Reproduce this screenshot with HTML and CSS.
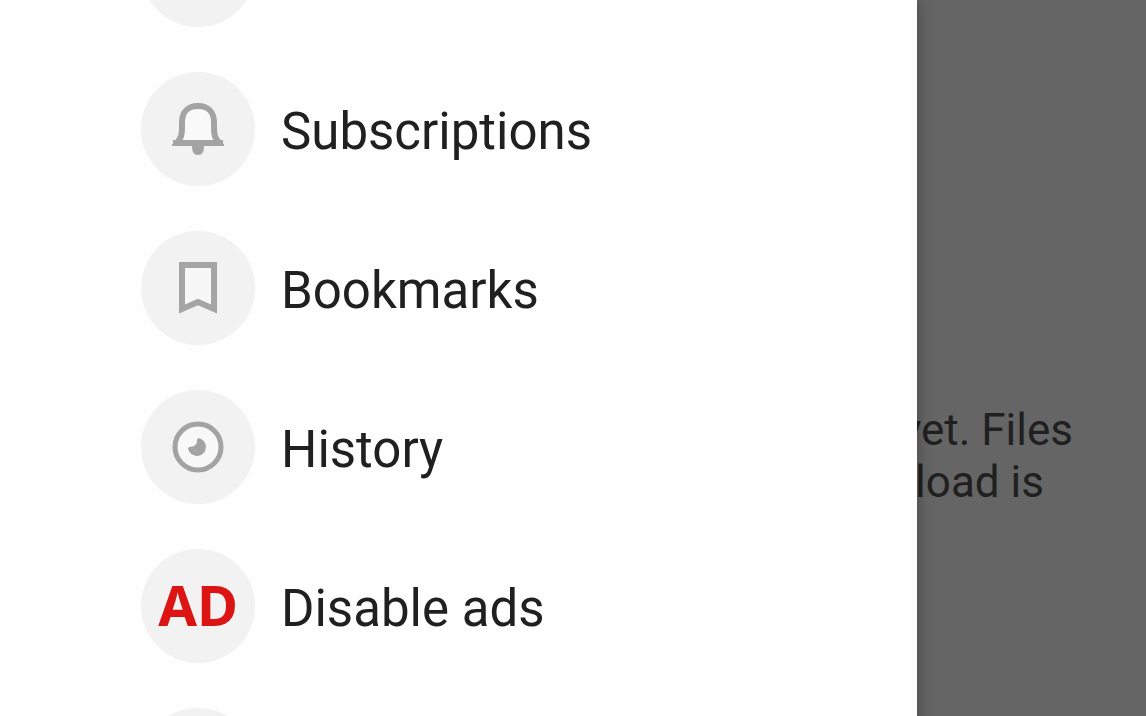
FILE: index.html
```html
<!DOCTYPE html>
<html lang="en">
<head>
    <meta charset="UTF-8">
    <meta name="viewport" content="width=device-width, initial-scale=1.0">
    <title>Downloads</title>
    <link rel="stylesheet" href="styles.css">
</head>
<body>

<div class="app">
    <nav class="drawer" aria-label="Menu">
        <ul class="menu">
            <li class="menu-item"><span class="menu-icon"></span></li>
            <li>
                <a class="menu-item" href="#subscriptions">
                    <span class="menu-icon">
                        <svg width="52" height="54" viewBox="0 0 52 54" fill="none">
                            <path d="M20 44 H32 C32 50 30 53 26 53 C22 53 20 50 20 44 Z" fill="#a3a3a3"/>
                            <path d="M5 41 C9 36 10 33 10 26 V20 C10 10 16 4 26 4 C36 4 42 10 42 20 V26 C42 33 43 36 47 41 Z" fill="#f9f9f9" stroke="#a3a3a3" stroke-width="6"/>
                            <path d="M1 38 H51 V44 H1 Z" fill="#a3a3a3"/>
                        </svg>
                    </span>
                    <span class="menu-label">Subscriptions</span>
                </a>
            </li>
            <li>
                <a class="menu-item" href="#bookmarks">
                    <span class="menu-icon">
                        <svg width="40" height="54" viewBox="0 0 40 54" fill="none">
                            <path d="M4 4 H36 V48 L20 41 L4 48 Z" fill="#f7f7f7" stroke="#a5a5a5" stroke-width="6"/>
                        </svg>
                    </span>
                    <span class="menu-label">Bookmarks</span>
                </a>
            </li>
            <li>
                <a class="menu-item" href="#history">
                    <span class="menu-icon">
                        <svg width="52" height="52" viewBox="0 0 52 52" fill="none">
                            <circle cx="26" cy="26" r="23" fill="#f8f8f8" stroke="#a3a3a3" stroke-width="5"/>
                            <path d="M26 17 A9 9 0 1 1 16 27 C18 25 20 26 22 25 C26 23 24 20 26 17 Z" fill="#a3a3a3"/>
                        </svg>
                    </span>
                    <span class="menu-label">History</span>
                </a>
            </li>
            <li>
                <a class="menu-item" href="#disable-ads">
                    <span class="menu-icon menu-icon-ad">AD</span>
                    <span class="menu-label">Disable ads</span>
                </a>
            </li>
            <li class="menu-item"><span class="menu-icon"></span></li>
        </ul>
    </nav>

    <main class="page">
        <p class="message">
            <span class="message-line">yet. Files</span>
            <span class="message-line message-line-short">load is</span>
        </p>
    </main>
</div>

</body>
</html>
```
FILE: styles.css
```css
body {
    margin: 0;
    font-family: Roboto, "Liberation Sans", sans-serif;
    color: #202020;
}

.app {
    display: grid;
    grid-template-columns: 80% 20%;
    height: 100vh;
    overflow: hidden;
    background-color: #656565;
}

/* drawer lies above the dimmed page */
.drawer {
    z-index: 1;
    background-color: #fefefe;
    box-shadow: 0 0 16px rgba(0, 0, 0, 0.3);
}

.menu {
    display: flex;
    flex-direction: column;
    gap: 45px;
    margin: -87px 0 0;
    padding: 0 0 0 141px;
    list-style: none;
}

.menu-item {
    display: flex;
    align-items: center;
    gap: 26px;
    color: inherit;
    text-decoration: none;
}

.menu-icon {
    display: flex;
    flex-shrink: 0;
    align-items: center;
    justify-content: center;
    width: 114px;
    height: 114px;
    border-radius: 50%;
    background-color: #f2f2f2;
}

.menu-icon-ad {
    box-sizing: border-box;
    padding-bottom: 4px;
    font-family: "Noto Sans", "Open Sans", sans-serif;
    font-size: 56px;
    font-weight: bold;
    color: #dc1414;
}

.menu-label {
    padding-top: 6px;
    font-size: 51px;
    line-height: 60px;
}

.page {
    padding-top: 404px;
}

.message {
    display: flex;
    flex-direction: column;
    align-items: flex-end;
    margin: 0;
    padding-right: 73px;
    font-size: 44px;
    line-height: 52px;
    white-space: nowrap;
}

.message-line-short {
    padding-right: 29px;
}
```
